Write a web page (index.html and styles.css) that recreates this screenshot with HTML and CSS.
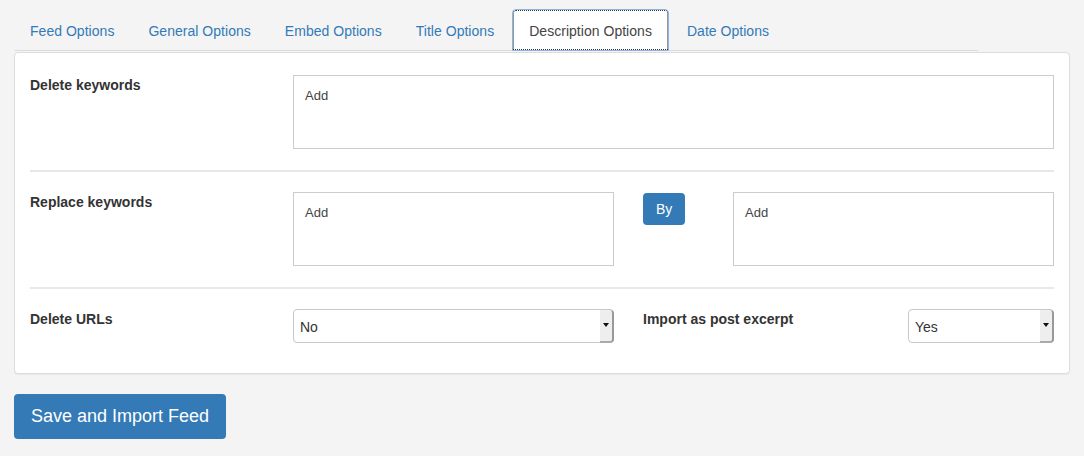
FILE: index.html
```html
<!DOCTYPE html>
<html lang="en">
<head>
    <meta charset="UTF-8">
    <meta name="viewport" content="width=device-width, initial-scale=1.0">
    <title>Description Options</title>
    <link rel="stylesheet" href="styles.css">
</head>
<body>
    <ul class="nav_tabs">
        <li><a href="#">Feed Options</a></li>
        <li><a href="#">General Options</a></li>
        <li><a href="#">Embed Options</a></li>
        <li><a href="#">Title Options</a></li>
        <li class="active"><a href="#">Description Options</a></li>
        <li><a href="#">Date Options</a></li>
    </ul>
    <form class="panel">
        <div class="form_row">
            <label class="row_label">Delete keywords</label>
            <textarea class="tag_box wide" placeholder="Add"></textarea>
        </div>
        <hr>
        <div class="form_row">
            <label class="row_label">Replace keywords</label>
            <textarea class="tag_box half" placeholder="Add"></textarea>
            <button type="button" class="btn by_btn">By</button>
            <textarea class="tag_box half push_right" placeholder="Add"></textarea>
        </div>
        <hr>
        <div class="form_row">
            <label class="row_label">Delete URLs</label>
            <div class="select_wrap half">
                <select>
                    <option>No</option>
                    <option>Yes</option>
                </select>
                <span class="arrow"></span>
            </div>
            <label class="row_label side_label">Import as post excerpt</label>
            <div class="select_wrap small">
                <select>
                    <option>Yes</option>
                    <option>No</option>
                </select>
                <span class="arrow"></span>
            </div>
        </div>
    </form>
    <button type="button" class="btn btn_lg">Save and Import Feed</button>
</body>
</html>
```

FILE: styles.css
```css
body{
    margin: 0;
    padding: 9px 14px 0;
    background: #f4f4f4;
    font-family: "Liberation Sans", Arial, sans-serif;
    font-size: 14px;
    color: #333;
}
.nav_tabs{
    list-style: none;
    margin: 0;
    padding: 0;
    width: 964px;
    display: flex;
    border-bottom: 1px solid #dcdcdc;
}
.nav_tabs li{
    margin-bottom: -1px;
}
.nav_tabs a{
    display: block;
    margin-right: 2px;
    padding: 11px 15px 9px;
    line-height: 20px;
    letter-spacing: .03px;
    border: 1px solid transparent;
    border-radius: 4px 4px 0 0;
    color: #337ab7;
    text-decoration: none;
}
.nav_tabs .active a{
    padding-left: 16px;
    padding-right: 16px;
    background: #fff;
    color: #444;
    border-color: #86b4e4;
    outline: 1px dotted #333;
    outline-offset: -2px;
}
.panel{
    margin-top: 1px;
    background: #fff;
    border: 1px solid #ddd;
    border-radius: 4px;
    box-shadow: 0 1px 1px rgba(0, 0, 0, .05);
    padding: 22px 15px 30px;
}
.panel hr{
    border: 0;
    height: 2px;
    background: #e8e8e8;
    margin: 21px 0 20px;
}
.form_row{
    display: flex;
    align-items: flex-start;
}
.row_label{
    width: 263px;
    flex: none;
    font-weight: bold;
    line-height: 20px;
}
.tag_box{
    box-sizing: border-box;
    height: 74px;
    padding: 12px 11px;
    border: 1px solid #ccc;
    border-radius: 0;
    resize: none;
    font-family: inherit;
    font-size: 13px;
    color: #333;
}
.tag_box::placeholder{
    color: #444;
    opacity: 1;
}
.wide{
    flex: 1;
}
.half{
    width: 321px;
    flex: none;
}
.push_right{
    margin-left: auto;
}
.btn{
    border: 0;
    border-radius: 4px;
    background: #337ab7;
    color: #fff;
    font-family: inherit;
    cursor: pointer;
}
.by_btn{
    margin: 1px 0 0 29px;
    height: 32px;
    padding: 0 13px;
    font-size: 14px;
}
.select_wrap{
    position: relative;
    box-sizing: border-box;
    height: 34px;
}
.select_wrap.small{
    width: 146px;
    margin-left: auto;
}
.select_wrap select{
    appearance: none;
    -webkit-appearance: none;
    box-sizing: border-box;
    width: 100%;
    height: 100%;
    padding: 2px 6px 0;
    border: 1px solid #c8c8c8;
    border-radius: 4px;
    background: #fff;
    font-family: inherit;
    font-size: 14px;
    color: #333;
}
.select_wrap .arrow{
    position: absolute;
    top: 1px;
    right: 0;
    bottom: 0;
    width: 12px;
    background: #eee;
    border-right: 2px solid #999;
    border-bottom: 2px solid #aaa;
    border-radius: 0 4px 4px 0;
}
.select_wrap .arrow::after{
    content: "";
    position: absolute;
    left: 3px;
    top: 13px;
    border-left: 3px solid transparent;
    border-right: 3px solid transparent;
    border-top: 4px solid #111;
}
.side_label{
    margin-left: 29px;
    width: auto;
}
.btn_lg{
    margin-top: 20px;
    padding: 10px 17px;
    font-size: 18px;
    line-height: 25px;
}
```
